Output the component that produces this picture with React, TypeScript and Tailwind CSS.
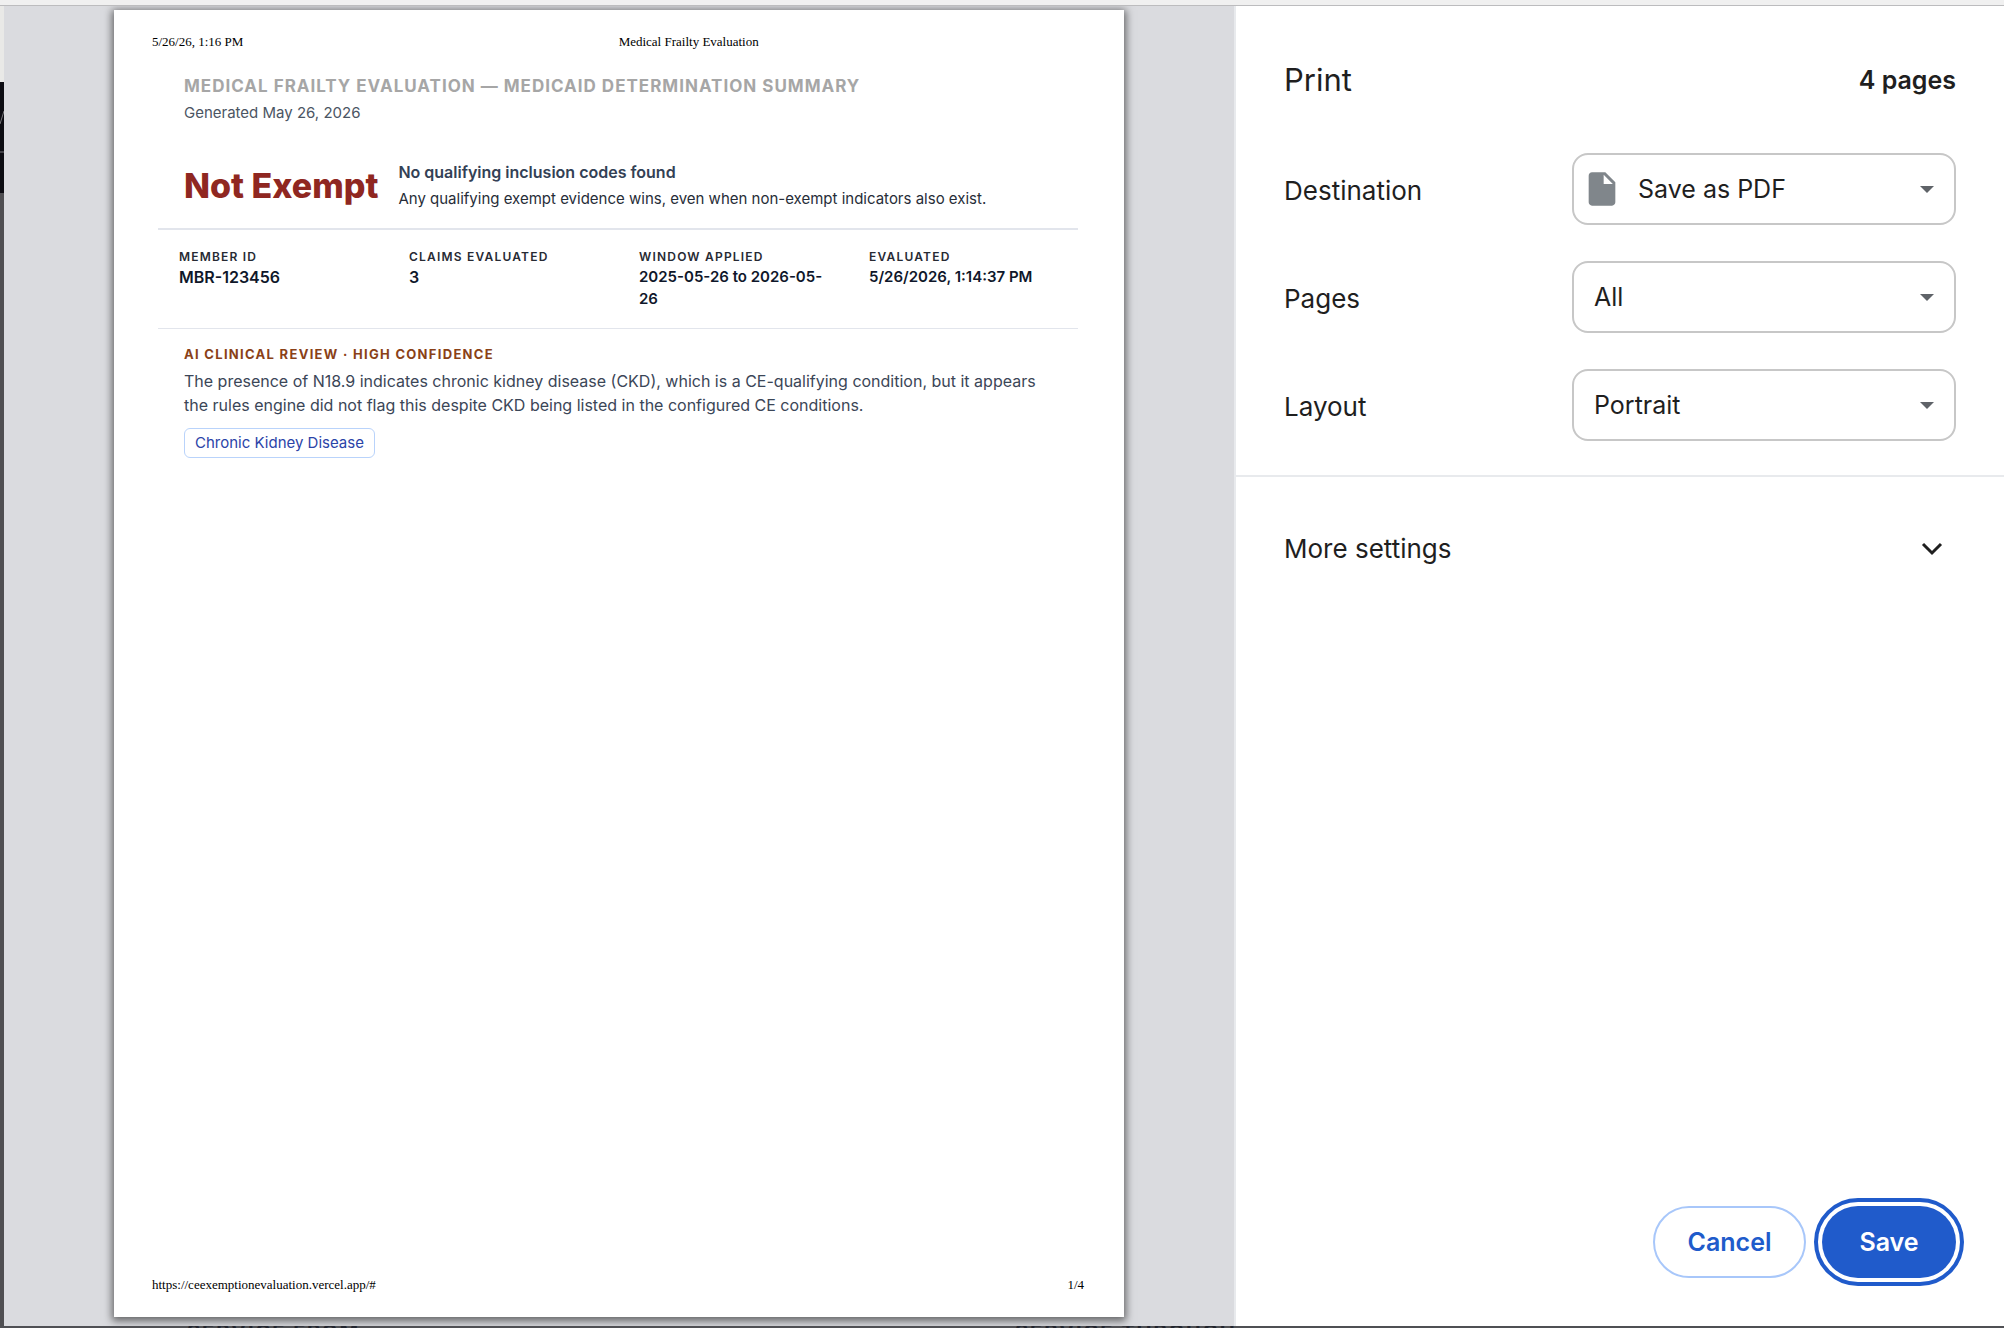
import { ReactNode } from "react";

type Fact = {
  label: string;
  value: string;
  small?: boolean;
};

const facts: Fact[] = [
  { label: "Member ID", value: "MBR-123456" },
  { label: "Claims evaluated", value: "3" },
  { label: "Window applied", value: "2025-05-26 to 2026-05-26", small: true },
  { label: "Evaluated", value: "5/26/2026, 1:14:37 PM", small: true },
];

const FileIcon = () => (
  <svg viewBox="0 0 24 24" className="h-10 w-10 fill-[#80868b]" aria-hidden="true">
    <path d="M6 2c-1.1 0-1.99.9-1.99 2L4 20c0 1.1.89 2 1.99 2H18c1.1 0 2-.9 2-2V8l-6-6H6zm7 7V3.5L18.5 9H13z" />
  </svg>
);

type SettingProps = {
  id: string;
  label: string;
  options: string[];
  icon?: ReactNode;
};

const Setting = ({ id, label, options, icon }: SettingProps) => (
  <div className="flex items-center justify-between">
    <label htmlFor={id} className="pt-0.5 text-[26px]">
      {label}
    </label>
    <div className="relative w-96">
      {icon && <span className="pointer-events-none absolute inset-y-0 left-2.5 flex items-center">{icon}</span>}
      <select
        id={id}
        className={`h-[72px] w-full appearance-none rounded-2xl border-2 border-[#c7c7c7] bg-white pt-0.5 pr-16 text-[25px] ${
          icon ? "pl-16" : "pl-5"
        }`}
      >
        {options.map((option) => (
          <option key={option}>{option}</option>
        ))}
      </select>
      <span className="pointer-events-none absolute inset-y-0 right-[22px] flex items-center">
        <svg viewBox="0 0 14 7" className="h-[7px] w-3.5 fill-[#5f6368]" aria-hidden="true">
          <path d="M0 0h14L7 7z" />
        </svg>
      </span>
    </div>
  </div>
);

const Paper = () => (
  <article className="flex flex-1 flex-col bg-white py-[22px] pr-10 pl-[38px] shadow-[0_2px_8px_2px_rgba(0,0,0,0.55)]">
    {/* Running header */}
    <div className="flex font-['Liberation_Serif',serif] text-[13px] leading-5 text-black">
      <span>5/26/26, 1:16 PM</span>
      <span className="flex-1 pl-[50px] text-center">Medical Frailty Evaluation</span>
    </div>

    <div className="mx-1.5 flex-1">
      {/* Report title */}
      <header className="px-[26px] pt-[22px]">
        <h1 className="text-[17px] leading-6 font-bold tracking-[1px] text-[#a6a6a6] uppercase">
          Medical Frailty Evaluation — Medicaid Determination Summary
        </h1>
        <p className="mt-1 text-[15px] leading-[22px] text-[#4b5563]">Generated May 26, 2026</p>
      </header>

      {/* Verdict */}
      <section className="mt-[34px] flex items-center gap-5 border-b-2 border-[#e2e5ec] px-[26px] pb-4">
        <h2 className="pt-0.5 text-[34px] leading-[52px] font-extrabold text-[#8f2721]">Not Exempt</h2>
        <div>
          <p className="text-base leading-7 font-semibold text-[#334155]">No qualifying inclusion codes found</p>
          <p className="text-[15px] leading-[26px] text-[#272d38]">
            Any qualifying exempt evidence wins, even when non-exempt indicators also exist.
          </p>
        </div>
      </section>

      {/* Member facts */}
      <dl className="grid grid-cols-4 border-b border-[#e2e5ec] py-[18px]">
        {facts.map((fact) => (
          <div key={fact.label} className="pr-5 pl-[21px]">
            <dt className="text-xs leading-[18px] font-semibold tracking-widest text-[#272a33] uppercase">
              {fact.label}
            </dt>
            <dd className={`leading-[22px] font-semibold text-[#0f172a] ${fact.small ? "text-[15px]" : "text-base"}`}>
              {fact.value}
            </dd>
          </div>
        ))}
      </dl>

      {/* AI review */}
      <section className="px-[26px] pt-[15px]">
        <h3 className="text-[13px] leading-5 font-bold tracking-widest text-[#8a4117] uppercase">
          AI Clinical Review · High Confidence
        </h3>
        <p className="mt-[5px] text-base leading-6 text-[#3b4657]">
          The presence of N18.9 indicates chronic kidney disease (CKD), which is a CE-qualifying condition, but it
          appears the rules engine did not flag this despite CKD being listed in the configured CE conditions.
        </p>
        <span className="mt-[11px] inline-block rounded-md border border-[#b9d3fb] px-2.5 text-[15px] leading-7 text-[#2b44a8]">
          Chronic Kidney Disease
        </span>
      </section>
    </div>

    {/* Running footer */}
    <div className="flex justify-between font-['Liberation_Serif',serif] text-[13px] leading-5 text-black">
      <span>https://ceexemptionevaluation.vercel.app/#</span>
      <span>1/4</span>
    </div>
  </article>
);

const PrintSettings = () => (
  <aside className="flex w-[768px] shrink-0 flex-col bg-white text-[#1f1f1f]">
    <div className="flex items-center justify-between px-12 pt-[50px] pb-[49px]">
      <h1 className="text-[31px] leading-[48px]">Print</h1>
      <span className="pt-0.5 text-[25px] font-semibold">4 pages</span>
    </div>

    <div className="flex flex-col gap-9 border-b-2 border-[#e8eaed] px-12 pb-[34px]">
      <Setting id="destination" label="Destination" options={["Save as PDF"]} icon={<FileIcon />} />
      <Setting id="pages" label="Pages" options={["All", "Odd pages only", "Even pages only", "Custom"]} />
      <Setting id="layout" label="Layout" options={["Portrait", "Landscape"]} />
    </div>

    <button className="flex items-center justify-between pt-[52px] pr-[60px] pb-14 pl-12 text-[26px] leading-10">
      More settings
      <svg viewBox="0 0 24 16" className="h-4 w-6 fill-none stroke-[#1f1f1f] stroke-3" aria-hidden="true">
        <path d="M3 3l9 9 9-9" />
      </svg>
    </button>

    <div className="mt-auto flex justify-end gap-4 px-12 pb-12">
      <button className="h-[72px] w-[153px] rounded-full border-2 border-[#a8c7fa] pt-0.5 text-[25px] font-semibold text-[#205bcb]">
        Cancel
      </button>
      <button className="h-[72px] w-[134px] rounded-full bg-[#205bcb] pt-0.5 text-[25px] font-semibold text-white outline-4 outline-offset-4 outline-[#205bcb]">
        Save
      </button>
    </div>
  </aside>
);

// Slice of the page that stays visible left of the dialog
const PageEdge = () => (
  <div className="flex w-1 flex-col">
    <div className="h-[76px] bg-[#e9e9e7]" />
    <div className="h-[111px] bg-[#0c0c12]">
      <svg viewBox="0 0 4 111" className="h-full w-1 fill-none stroke-[#77777a]">
        <path d="M0 42L4 29M0 70h4" />
      </svg>
    </div>
    <div className="flex-1 bg-[#4f4f52]" />
  </div>
);

const App = () => {
  return (
    <div className="flex h-screen flex-col overflow-hidden bg-[#4f5054] font-[Inter,sans-serif]">
      <div className="h-1.5 shrink-0 border-b border-[#bcbcbe] bg-[#f0f0f0]" />
      <div className="flex min-h-0 flex-1">
        <PageEdge />
        <main className="flex flex-1 overflow-hidden border-r-2 border-[#e8eaed] bg-[#dadbdf] px-[110px] pt-1 pb-[9px]">
          <Paper />
        </main>
        <PrintSettings />
      </div>
      {/* Form labels peeking out under the dialog */}
      <div className="grid h-0.5 shrink-0 grid-cols-[828px_1fr] overflow-hidden pl-[187px] text-xl leading-3 font-bold tracking-widest text-[#22252e]">
        <span>SERVICE FROM</span>
        <span>SERVICE THROUGH</span>
      </div>
    </div>
  );
};

export default App;
